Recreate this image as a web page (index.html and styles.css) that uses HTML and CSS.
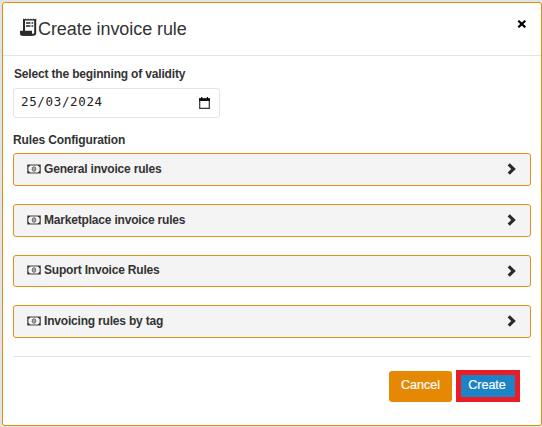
FILE: index.html
```html
<!DOCTYPE html>
<html lang="en">
<head>
<meta charset="utf-8">
<title>Create invoice rule</title>
<link rel="stylesheet" href="styles.css">
</head>
<body>
<svg width="0" height="0" class="defs">
  <symbol id="money" viewBox="0 0 14 10"><path d="M.8 1h12.400v8H.8z" fill="#f4f4f4" stroke="#444" stroke-width="1.200"/><path d="M1 1h2.500L1 3.500zM13 1v2.500L10.500 1zM1 9V6.500L3.500 9zM13 9h-2.500L13 6.500z" fill="#333"/><ellipse cx="7" cy="5" rx="1.800" ry="2.300" fill="#ddd" stroke="#555" stroke-width=".9"/><path d="M7 3.700v2.600" stroke="#444" stroke-width=".7"/></symbol>
  <symbol id="chevron" viewBox="0 0 9 12"><path d="M1.700 1.300L6.500 6l-4.800 4.700" fill="none" stroke="#2b2b2b" stroke-width="3.200"/></symbol>
</svg>
<main class="modal">
  <header class="head">
    <svg class="receipt" width="17" height="18" viewBox="0 0 17 18"><path d="M4 13V1.500M15.200 1.500V15q0 1.800-2 1.800H3" fill="none" stroke="#29292e" stroke-width="2"/><path d="M3 2.500V.5l1.300 1L5.600.5l1.300 1L8.200.5l1.300 1 1.300-1 1.300 1 1.300-1 1.300 1 1.500-1v2z" fill="#29292e"/><path d="M0 12.700h12v2.500q0 1 1 1l-1 1.600H2.500Q0 17.800 0 15.200z" fill="#29292e"/><path d="M6 5h4.500M6 8h4.500M11.500 5H13.200M11.500 8H13.200" stroke="#29292e" stroke-width="1.600"/></svg>
    <h1>Create invoice rule</h1>
    <button class="close" aria-label="Close"><svg width="10" height="8" viewBox="0 0 10 8"><path d="M1.300.7l7 6.600M8.300.7l-7 6.600" stroke="#000" stroke-width="2.200"/></svg></button>
  </header>
  <section class="content">
    <div class="label validity">Select the beginning of validity</div>
    <div class="date"><span>25/03/2024</span><svg width="11" height="12" viewBox="0 0 11 12"><path d="M.7 2h9.600v9.300H.7z" fill="none" stroke="#333" stroke-width="1.200"/><path d="M0 1.300h11V4H0zM2 0h1.300v2H2zM7.700 0H9v2H7.700z" fill="#111"/></svg></div>
    <div class="label config">Rules Configuration</div>
    <div class="rules">
      <div class="rule"><svg class="money"><use href="#money"/></svg><span>General invoice rules</span><svg class="chevron"><use href="#chevron"/></svg></div>
      <div class="rule"><svg class="money"><use href="#money"/></svg><span>Marketplace invoice rules</span><svg class="chevron"><use href="#chevron"/></svg></div>
      <div class="rule short"><svg class="money"><use href="#money"/></svg><span>Suport Invoice Rules</span><svg class="chevron"><use href="#chevron"/></svg></div>
      <div class="rule"><svg class="money"><use href="#money"/></svg><span>Invoicing rules by tag</span><svg class="chevron"><use href="#chevron"/></svg></div>
    </div>
    <footer class="actions"><button class="btn cancel">Cancel</button><button class="btn create">Create</button></footer>
  </section>
</main>
</body>
</html>
```
FILE: styles.css
```css
* { box-sizing: border-box; }
body { margin: 0; height: 427px; padding: 2px 0 1px 2px; background: #e3e3e3; overflow: hidden; font-family: "Liberation Sans", Arial, sans-serif; color: #333; }
.defs { display: none; }
.modal { width: 540px; height: 424px; background: #fff; border: 1px solid #e78b0a; border-radius: 3px; }
.head { height: 53px; border-bottom: 1px solid #e5e5e5; display: flex; align-items: flex-start; padding: 15px 14px 0 17px; }
.receipt { flex: none; }
h1 { margin: 1px 0 0 1px; font-size: 18px; line-height: 20px; font-weight: 400; letter-spacing: -.07px; white-space: nowrap; }
.close { margin: 2px 0 0 auto; padding: 0; border: 0; background: none; height: 8px; }
.close svg { display: block; }
.content { padding: 0 10px; }
.label { font-size: 12px; line-height: 16px; font-weight: 700; white-space: nowrap; }
.validity { margin: 10px 0 6px 1px; letter-spacing: -.17px; }
.date { width: 207px; height: 30px; border: 1px solid #e4e4e4; border-radius: 3px; padding: 4px 9px 0 7px; display: flex; justify-content: space-between; font-family: "DejaVu Sans Mono", monospace; font-size: 12.500px; letter-spacing: .65px; line-height: 17px; color: #222; }
.date svg { margin-top: 4px; }
.config { margin: 14px 0 5px; letter-spacing: -.13px; }
.rules { display: grid; gap: 18px; }
.rule { width: 518px; height: 33px; background: #f4f4f4; border: 1px solid #e1901b; border-radius: 3px; display: flex; align-items: center; padding: 0 14px 2px 13px; font-size: 12px; font-weight: 700; letter-spacing: -.19px; }
.rule.short { height: 32px; }
.money { width: 14px; height: 10px; margin-right: 3px; }
.chevron { width: 9px; height: 12px; margin: 1px 0 0 auto; }
.actions { width: 518px; margin-top: 18px; border-top: 1px solid #e2e2e2; display: flex; justify-content: flex-end; align-items: flex-start; gap: 4px; padding: 13px 11px 0 0; }
.btn { font-family: inherit; font-size: 12.500px; line-height: 14px; color: #fff; padding: 0; -webkit-text-stroke: .2px #fff; }
.cancel { width: 63px; height: 31px; margin-top: 1px; padding-bottom: 3px; background: #e58804; border: 0; border-radius: 3px; }
.create { width: 64px; height: 32px; background: #1c83c6; border: 5px solid #ec1c24; padding: 0 2px 3px 0; }
```
